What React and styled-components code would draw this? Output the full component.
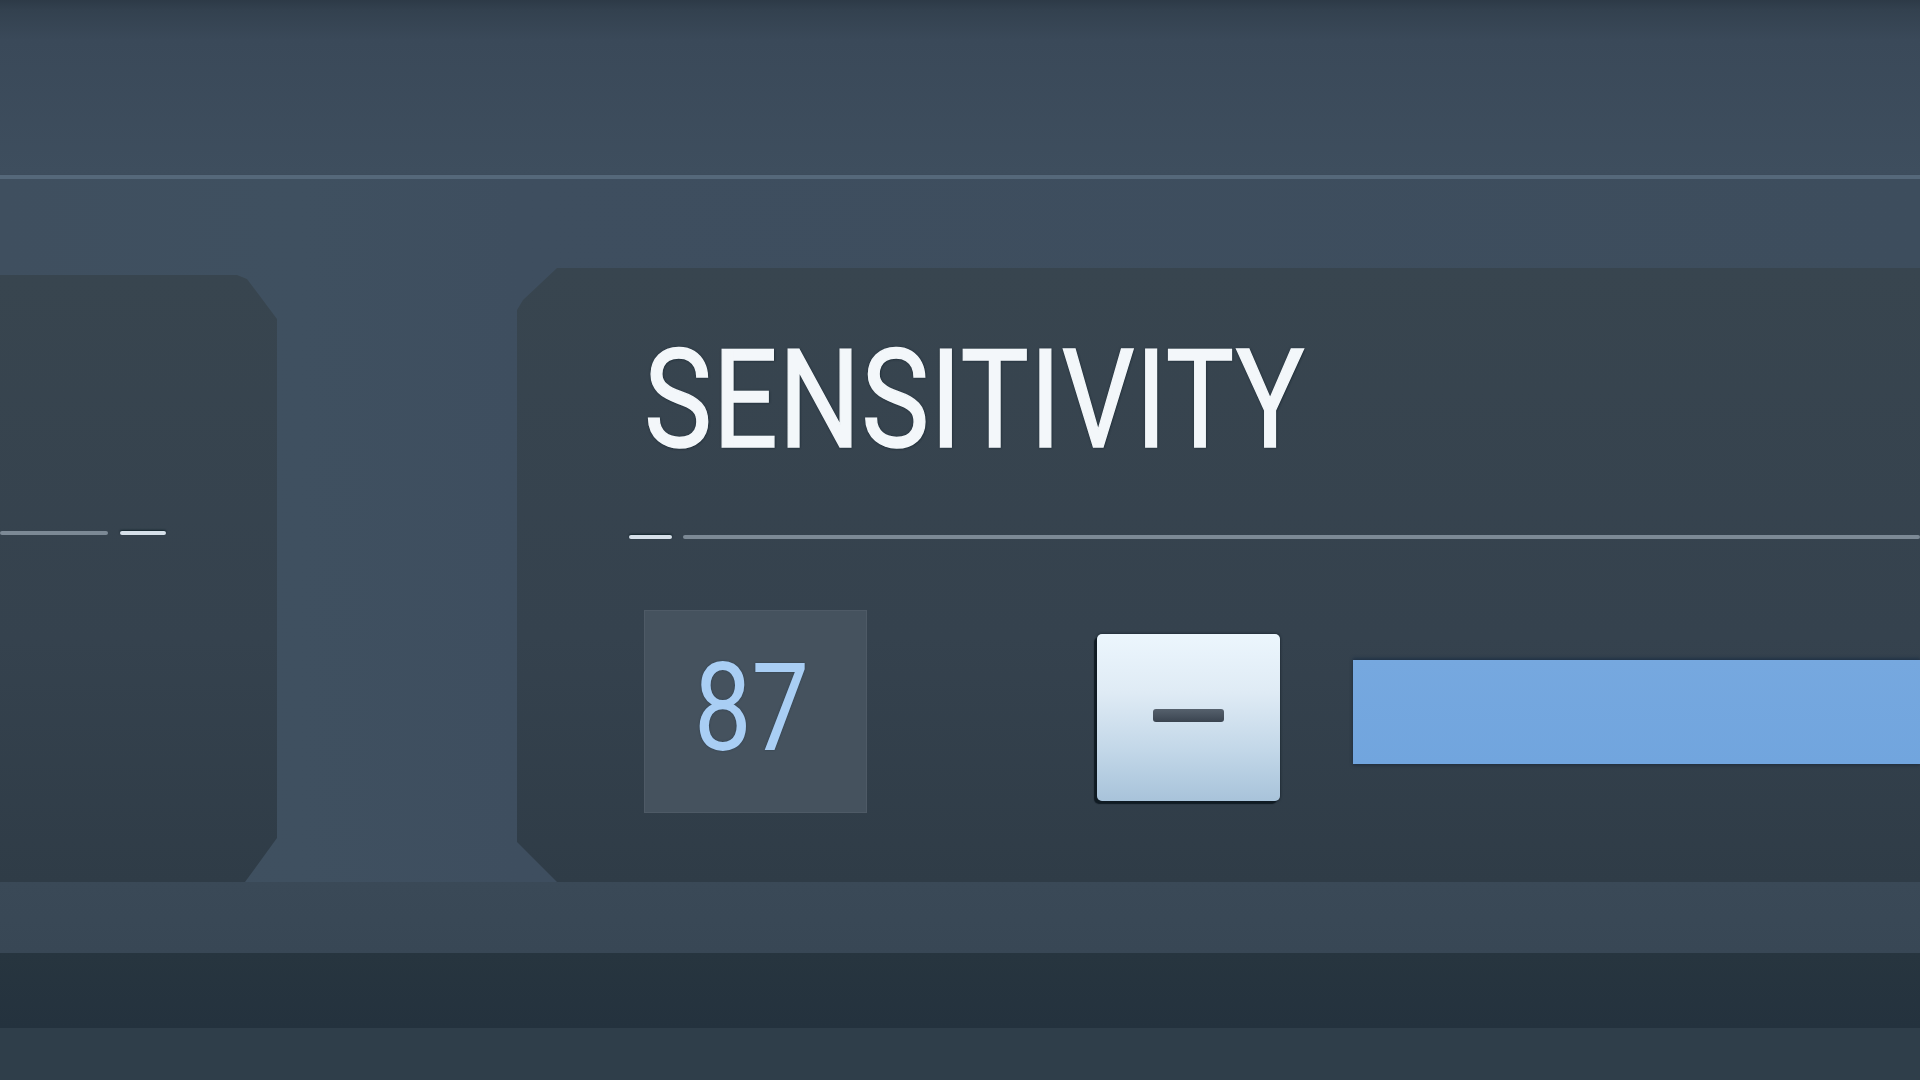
import React from "react";
import styled, { createGlobalStyle } from "styled-components";

const Global = createGlobalStyle`
  html, body { margin: 0; padding: 0; background: #3d4d5d; }
  body { overflow: hidden; font-family: Roboto, "Liberation Sans", sans-serif; }
  * { box-sizing: border-box; }
`;

const Screen = styled.div`
  width: 1920px;
  height: 1080px;
  overflow: hidden;
  display: flex;
  flex-direction: column;
  background: #3e4e5e;
`;

const Header = styled.div`
  height: 175px;
  flex: none;
  background: linear-gradient(180deg, #2d3a47 0px, #33414f 10px, #3a4959 40px, #3e4e5e 100%);
`;

const Divider = styled.div`
  height: 4px;
  flex: none;
  background: #55687a;
  box-shadow: 0 1px 2px rgba(30, 40, 50, 0.35);
`;

const PanelRow = styled.div`
  flex: none;
  height: 703px;
  display: flex;
  align-items: flex-end;
  gap: 240px;
  background: linear-gradient(90deg, #3f4f5f 0, #3f5060 300px, #3e4e5f 520px, #3d4d5d 100%);
`;

const Panel = styled.section`
  flex: none;
  height: ${(p) => p.$h}px;
  background: linear-gradient(180deg, #38454f 0%, #35424e 60%, #2f3c47 100%);
`;

const SidePanel = styled(Panel)`
  width: 277px;
  clip-path: polygon(0 0, calc(100% - 40px) 0, calc(100% - 30px) 4px, 100% 44px, 100% calc(100% - 44px), calc(100% - 32px) 100%, 0 100%);
`;

const MainPanel = styled(Panel)`
  flex: 1;
  padding: 63px 0 0 127px;
  display: flex;
  flex-direction: column;
  clip-path: polygon(40px 0, 100% 0, 100% 100%, 40px 100%, 0 calc(100% - 40px), 0 42px, 6px 32px);
`;

const SideRule = styled.div`
  margin-top: 256px;
  display: flex;
  align-items: center;
  gap: 12px;
`;

const RuleLine = styled.div`
  height: 4px;
  border-radius: 2px;
  width: ${(p) => (p.$w ? `${p.$w}px` : "auto")};
  flex: ${(p) => (p.$w ? "none" : "1")};
  background: ${(p) => (p.$accent ? "#d6e0e9" : "#7c8995")};
  box-shadow: ${(p) => (p.$accent ? "0 -1px 2px rgba(10,30,35,0.8)" : "none")};
`;

const Title = styled.h1`
  margin: 0;
  font-family: Roboto, "Liberation Sans", sans-serif;
  font-weight: 400;
  font-size: 138px;
  line-height: 138px;
  height: 138px;
  color: #f3f7fa;
  letter-spacing: 1px;
  transform: scaleX(0.83);
  transform-origin: 0 0;
  white-space: nowrap;
  -webkit-text-stroke: 1.5px #f3f7fa;
  text-shadow: 0 0 3px rgba(10, 25, 35, 0.7), 1px 1px 2px rgba(10, 25, 35, 0.5);
`;

const TitleRule = styled.div`
  margin: 66px 0 0 -15px;
  display: flex;
  align-items: center;
  gap: 11px;
`;

const Controls = styled.div`
  margin-top: 71px;
  display: flex;
  align-items: center;
`;

const ValueBox = styled.div`
  width: 223px;
  height: 203px;
  flex: none;
  display: flex;
  align-items: center;
  justify-content: center;
  background: #45525e;
  border: 1px solid rgba(255, 255, 255, 0.05);
`;

const ValueText = styled.span`
  display: inline-block;
  font-family: Roboto, "Liberation Sans", sans-serif;
  font-weight: 400;
  font-size: 122px;
  line-height: 1;
  color: #a9cef4;
  transform: scaleX(0.84);
  margin-top: -6px;
  margin-left: -8px;
  text-shadow: 0 0 2px rgba(20, 40, 60, 0.6);
`;

const StepButton = styled.button`
  width: 183px;
  height: 167px;
  flex: none;
  margin: 12px 0 0 230px;
  padding: 0;
  border: none;
  border-radius: 5px;
  display: flex;
  align-items: center;
  justify-content: center;
  cursor: pointer;
  background: linear-gradient(180deg, #ecf6fd 0%, #dfebf5 35%, #c2d7e8 70%, #a8c3da 100%);
  box-shadow: -3px 3px 1px #101b23, 0 0 3px rgba(10, 20, 28, 0.8);
`;

const MinusMark = styled.span`
  width: 71px;
  height: 13px;
  border-radius: 3px;
  background: linear-gradient(180deg, #56616d, #3a4450);
  margin-top: -4px;
`;

const Track = styled.div`
  flex: 1;
  height: 104px;
  margin-left: 73px;
  background: linear-gradient(180deg, #76a8df 0%, #71a5de 100%);
  box-shadow: 0 -2px 3px rgba(25, 45, 70, 0.7), 0 2px 3px rgba(25, 40, 55, 0.5);
`;

const Band = styled.div`
  flex: none;
  height: ${(p) => p.$h}px;
  background: ${(p) => p.$bg};
`;

export default function App() {
  return (
    <>
      <Global />
      <Screen>
        <Header />
        <Divider />
        <PanelRow>
          <SidePanel $h={607}>
            <SideRule>
              <RuleLine $w={108} />
              <RuleLine $w={46} $accent />
            </SideRule>
          </SidePanel>
          <MainPanel $h={614}>
            <Title>SENSITIVITY</Title>
            <TitleRule>
              <RuleLine $w={43} $accent />
              <RuleLine />
            </TitleRule>
            <Controls>
              <ValueBox>
                <ValueText>87</ValueText>
              </ValueBox>
              <StepButton aria-label="Decrease">
                <MinusMark />
              </StepButton>
              <Track />
            </Controls>
          </MainPanel>
        </PanelRow>
        <Band $h={71} $bg="linear-gradient(180deg, #3a4957, #384755)" />
        <Band $h={75} $bg="linear-gradient(180deg, #27353f, #24323e)" />
        <Band $h={52} $bg="#2f3e4a" />
      </Screen>
    </>
  );
}
